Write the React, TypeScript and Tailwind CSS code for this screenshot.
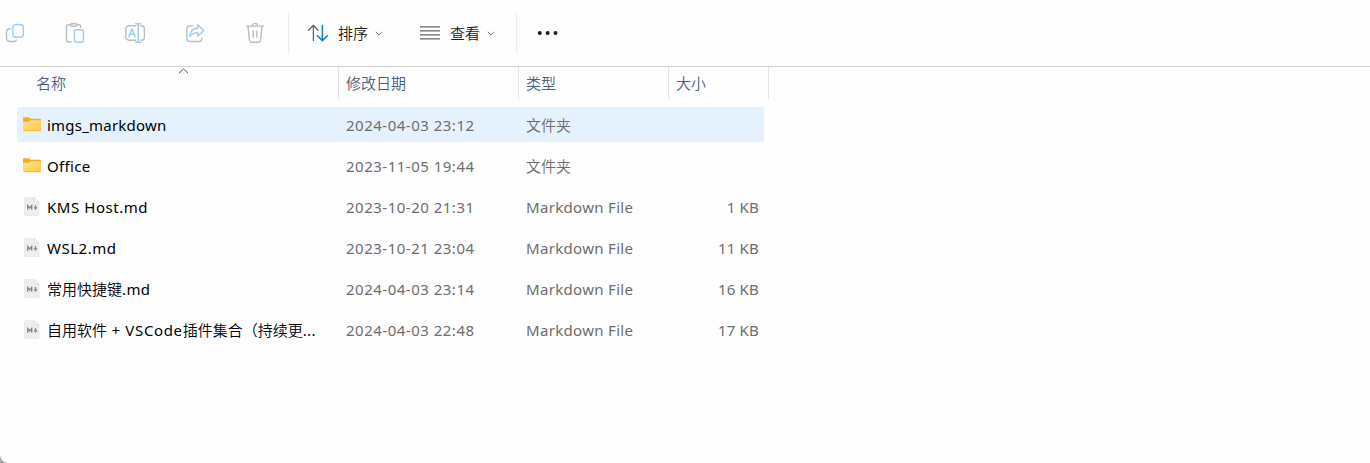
import React from "react";

const GRAY = "#bdbdbd";
const BLUE = "#9fcdf3";

function ToolIcon({ children }: { children: React.ReactNode }) {
  return (
    <div className="flex w-[60px] shrink-0 justify-center">
      <svg width="20" height="20" viewBox="0 0 20 20" fill="none" stroke={GRAY} strokeWidth="1.4" strokeLinecap="round" strokeLinejoin="round">
        {children}
      </svg>
    </div>
  );
}

function Chevron() {
  return (
    <svg width="8" height="5" viewBox="0 0 8 5" fill="none" stroke="#777" strokeWidth="1">
      <path d="M0.8 0.8 4 3.8 7.2 0.8" />
    </svg>
  );
}

function Toolbar() {
  return (
    <div className="flex h-[66px] items-center overflow-hidden">
      <div className="-ml-[15px] flex w-[303px] shrink-0">
        <ToolIcon>
          <path d="M5.2 5.8H4.8A3.3 3.3 0 0 0 1.5 9v6.2a3.3 3.3 0 0 0 3.3 3.3h4A3 3 0 0 0 11.5 17" />
          <rect x="7.8" y="1.5" width="10.6" height="12.8" rx="3" stroke={BLUE} />
        </ToolIcon>
        <ToolIcon>
          <path d="M5.2 1.8H3.2A1.7 1.7 0 0 0 1.5 3.5v13.8A1.7 1.7 0 0 0 3.2 19h3M12.2 1.8h1.8a1.7 1.7 0 0 1 1.7 1.7v.8" />
          <rect x="5.5" y="0.7" width="6.5" height="2.5" rx="1.2" />
          <rect x="9.5" y="6.7" width="9" height="12.5" rx="1.8" stroke={BLUE} />
        </ToolIcon>
        <ToolIcon>
          <path d="M10.8 2.7H4A3.2 3.2 0 0 0 .8 5.9v8.2A3.2 3.2 0 0 0 4 17.3h6.8M15.8 2.7h.4a3.2 3.2 0 0 1 3.2 3.2v8.2a3.2 3.2 0 0 1-3.2 3.2h-.4" />
          <path d="M3.8 13.7 7 5.8l3.2 7.9M4.9 11.2h4.2M10.8.8h5M13.3.8v18.5M10.8 19.3h5" stroke={BLUE} />
        </ToolIcon>
        <ToolIcon>
          <path d="M7.5 2.8H5A3.2 3.2 0 0 0 1.8 6v9.3a3.2 3.2 0 0 0 3.2 3.2h8.6a3.2 3.2 0 0 0 3.2-3.2V15" />
          <path d="M12.8 1.7v3.500C8 5.300 5.100 8.300 4.900 13.300c2-2.600 4.300-3.500 7.900-3.500v3.500l6-5.700z" stroke={BLUE} />
        </ToolIcon>
        <ToolIcon>
          <path d="M1.400 3.100h17.200M7.400 3A2.600 2.600 0 0 1 12.600 3M3 3.300l1.500 14.200a1.900 1.900 0 0 0 1.900 1.700h7.200a1.900 1.900 0 0 0 1.900-1.700L17 3.300M8.200 8.300v5.900M11.800 8.300v5.900" />
        </ToolIcon>
      </div>
      <div className="h-10 w-px shrink-0 bg-[#ececec]" />
      <div className="flex h-10 w-[227px] shrink-0 items-center pl-[18px]">
        <svg width="22" height="18" viewBox="0 0 22 18" fill="none" strokeWidth="1.300" strokeLinecap="round" strokeLinejoin="round">
          <path d="M6.400 16.500V1.300M1.500 6.300 6.400 1.300 11 6.300" stroke="#666" />
          <path d="M15.400 1.500v15M10.300 11.700l5.100 4.900 5.100-4.900" stroke="#0f80da" strokeWidth="1.500" />
        </svg>
        <span className="ml-[9px] font-[350] text-[#1c1c1c]">排序</span>
        <span className="ml-[7px]"><Chevron /></span>
        <svg className="ml-[37px]" width="20" height="14" viewBox="0 0 20 14" fill="none" stroke="#666" strokeWidth="1.400">
          <path d="M0 .9h20M0 4.900h20M0 8.900h20M0 12.900h20" />
        </svg>
        <span className="ml-[10px] font-[350] text-[#1c1c1c]">查看</span>
        <span className="ml-[7px]"><Chevron /></span>
      </div>
      <div className="h-10 w-px shrink-0 bg-[#ececec]" />
      <svg className="ml-5" width="22" height="6" viewBox="0 0 22 6" fill="#1c1c1c">
        <circle cx="2.800" cy="3" r="2" />
        <circle cx="10.600" cy="3" r="2" />
        <circle cx="18.500" cy="3" r="2" />
      </svg>
    </div>
  );
}

function FolderIcon() {
  return (
    <svg width="18" height="15" viewBox="0 0 18 15">
      <defs>
        <linearGradient id="folder" x1="0" y1="0" x2="1" y2="1">
          <stop offset="0" stopColor="#ffe394" />
          <stop offset="1" stopColor="#ffc93c" />
        </linearGradient>
      </defs>
      <path d="M0 1.200Q0 .2 1 .2h5l1.800 1.600H17q1 0 1 1V6H0z" fill="#f4ad1c" />
      <path d="M0 4.700h6.200l1.600-1.500H17q1 0 1 1v8.900q0 1-1 1H1q-1 0-1-1z" fill="url(#folder)" />
      <path d="M.3 13.700h17.400" stroke="#efb22c" strokeWidth=".8" />
    </svg>
  );
}

function MarkdownIcon() {
  return (
    <svg width="16" height="19" viewBox="0 0 16 19">
      <path d="M1.500.4h8.700L15 5v12.500q0 1-1 1H1.500q-1 0-1-1V1.400q0-1 1-1z" fill="#eeeeee" stroke="#e3e3e3" strokeWidth=".6" />
      <path d="M10 .5V5h4.800z" fill="#fbfbfb" stroke="#d2d2d2" strokeWidth=".6" />
      <path d="M3.700 12.700V8.600l2 2.400 2-2.400v4.100" fill="none" stroke="#858585" strokeWidth="1.300" />
      <path d="M11.500 8v2.500" stroke="#858585" strokeWidth="1.300" />
      <path d="M9.400 10.200h4.200L11.500 13z" fill="#858585" />
    </svg>
  );
}

type Row = { name: React.ReactNode; date: string; folder?: boolean; size?: string; active?: boolean };

const ROWS: Row[] = [
  { name: <span className="tracking-[0.22px]">imgs_markdown</span>, date: "2024-04-03 23:12", folder: true, active: true },
  { name: "Office", date: "2023-11-05 19:44", folder: true },
  { name: <span className="tracking-[0.55px]">KMS Host.md</span>, date: "2023-10-20 21:31", size: "1 KB" },
  { name: <span className="tracking-[0.5px]">WSL2.md</span>, date: "2023-10-21 23:04", size: "11 KB" },
  { name: <><span className="font-[350] tracking-normal">常用快捷键</span>.md</>, date: "2024-04-03 23:14", size: "16 KB" },
  {
    name: (
      <>
        <span className="font-[350] tracking-normal">自用软件</span>
        <span className="tracking-[0.65px]"> + VSCode</span>
        <span className="font-[350] tracking-normal">插件集合（持续更</span>...
      </>
    ),
    date: "2024-04-03 22:48",
    size: "17 KB",
  },
];

function FileRow({ row }: { row: Row }) {
  return (
    <div className={`flex h-[35px] w-[747px] items-center rounded-[2px] whitespace-pre text-[#6d6d6d] ${row.active ? "bg-[#e5f2fe]" : ""}`}>
      <div className="flex w-[30px] shrink-0 items-center pl-[6px]">
        {row.folder ? <FolderIcon /> : <span className="pl-px"><MarkdownIcon /></span>}
      </div>
      <div className="w-[299px] shrink-0 tracking-[0.35px] text-black">{row.name}</div>
      <div className="w-[180px] shrink-0 tracking-[0.5px]">{row.date}</div>
      <div className="w-[142px] shrink-0 tracking-[0.32px]">
        {row.folder ? <span className="font-[350] tracking-normal">文件夹</span> : "Markdown File"}
      </div>
      <div className="flex-1 pr-[5px] text-right tracking-[0.2px]">{row.size}</div>
    </div>
  );
}

export default function App() {
  return (
    <div className="relative h-[463px] w-[1370px] overflow-hidden bg-[#fefefe] font-['Noto_Sans','Noto_Sans_CJK_SC',sans-serif] text-[15px] leading-[20px]">
      <Toolbar />
      <div className="flex h-[34px] border-t border-[#d2d2d2] font-[350] text-[#4c5f7c]">
        <div className="relative h-8 w-[339px] border-r border-[#e2e2e2] pt-[6px] pl-9">
          名称
          <svg className="absolute top-[1px] left-[178px]" width="11" height="6" viewBox="0 0 11 6" fill="none" stroke="#555" strokeWidth="1">
            <path d="M1 5.200 5.500 .9 10 5.200" />
          </svg>
        </div>
        <div className="h-8 w-[180px] border-r border-[#e2e2e2] pt-[6px] pl-[7px]">修改日期</div>
        <div className="h-8 w-[150px] border-r border-[#e2e2e2] pt-[6px] pl-[7px]">类型</div>
        <div className="h-8 w-[100px] border-r border-[#e2e2e2] pt-[6px] pl-[7px]">大小</div>
      </div>
      <div className="mt-[7px] ml-[17px] flex flex-col gap-[6px]">
        {ROWS.map((row) => (
          <FileRow key={row.date} row={row} />
        ))}
      </div>
      <svg className="absolute bottom-0 left-0" width="8" height="8" viewBox="0 0 8 8">
        <path d="M0 0Q.8 6.800 7 8H0z" fill="#a5a5a5" />
      </svg>
    </div>
  );
}
